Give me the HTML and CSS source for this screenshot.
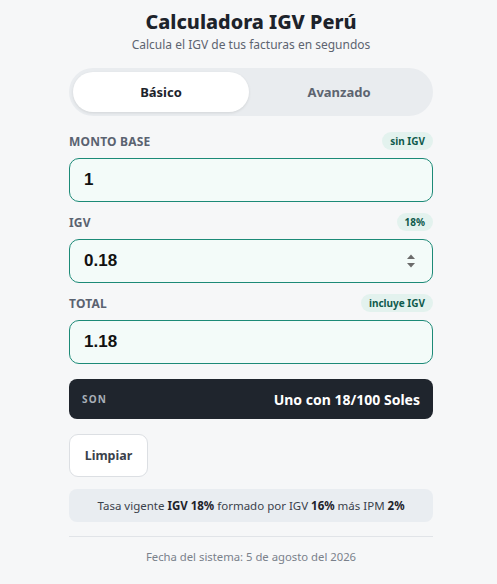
FILE: index.html
```html
<!DOCTYPE html>
<html lang="es">
<head>
<meta charset="utf-8">
<title>Calculadora IGV Perú</title>
<link rel="stylesheet" href="styles.css">
</head>
<body>
<main class="app">
  <header class="head">
    <h1 class="title">Calculadora IGV Perú</h1>
    <p class="subtitle">Calcula el IGV de tus facturas en segundos</p>
  </header>

  <nav class="tabs">
    <button class="tab tab-active">Básico</button>
    <button class="tab">Avanzado</button>
  </nav>

  <section class="field">
    <div class="field-head">
      <span class="label">MONTO BASE</span>
      <span class="badge">sin IGV</span>
    </div>
    <input class="input" type="text" value="1">
  </section>

  <section class="field">
    <div class="field-head">
      <span class="label">IGV</span>
      <span class="badge">18%</span>
    </div>
    <div class="input-wrap">
      <input class="input" type="text" value="0.18">
      <svg class="spinner" width="12" height="20" viewBox="0 0 12 20">
        <path d="M2 8 L6 3.5 L10 8 Z" fill="#6b6b6b"/>
        <path d="M2 12 L6 16.5 L10 12 Z" fill="#6b6b6b"/>
      </svg>
    </div>
  </section>

  <section class="field">
    <div class="field-head">
      <span class="label">TOTAL</span>
      <span class="badge">incluye IGV</span>
    </div>
    <input class="input" type="text" value="1.18">
  </section>

  <div class="son">
    <span class="son-label">SON</span>
    <span class="son-value">Uno con 18/100 Soles</span>
  </div>

  <div class="actions">
    <button class="btn">Limpiar</button>
  </div>

  <div class="info"><span>Tasa vigente <b>IGV 18%</b> formado por IGV <b>16%</b> más IPM <b>2%</b></span></div>

  <footer class="foot">Fecha del sistema: 5 de agosto del 2026</footer>
</main>
</body>
</html>
```

FILE: styles.css
```css
* { box-sizing: border-box; }
html, body { margin: 0; padding: 0; }
body {
  background: #f6f7f8;
  font-family: "Noto Sans", "Open Sans", sans-serif;
  color: #1d232b;
}
.app {
  width: 364px;
  margin: 0 0 0 69px;
  padding-top: 8px;
  display: flex;
  flex-direction: column;
}
.head { text-align: center; }
.title {
  margin: 0;
  font-size: 19.8px;
  line-height: 27px;
  font-weight: 800;
  color: #1d232b;
}
.subtitle {
  margin: 0;
  padding-top: 1px;
  font-size: 12px;
  line-height: 18px;
  color: #5d6470;
}
.tabs {
  margin-top: 14px;
  height: 48px;
  border-radius: 24px;
  background: #e9ecef;
  padding: 4px;
  display: flex;
}
.tab {
  flex: 1;
  border: 0;
  background: transparent;
  border-radius: 20px;
  font-family: inherit;
  font-size: 13px;
  font-weight: 700;
  color: #5d6470;
  cursor: pointer;
}
.tab-active {
  flex: 0 0 176px;
  background: #ffffff;
  color: #1d232b;
  box-shadow: 0 1px 3px rgba(0,0,0,0.10);
}
.field { margin-top: 16px; }
.field + .field { margin-top: 11px; }
.field-head {
  display: flex;
  justify-content: space-between;
  align-items: center;
  height: 18px;
  margin-bottom: 8px;
}
.label {
  font-size: 12px;
  font-weight: 700;
  color: #5a6270;
  letter-spacing: 0.2px;
}
.badge {
  background: #e3f2ee;
  color: #0f5a4c;
  font-size: 10px;
  font-weight: 700;
  padding: 1px 8px;
  border-radius: 9px;
  line-height: 16px;
}
.input-wrap { position: relative; }
.input {
  display: block;
  width: 100%;
  height: 44px;
  border: 1.5px solid #1c8a77;
  border-radius: 10px;
  background: #f3fbf9;
  padding: 0 14px;
  font-family: "Liberation Sans", Arial, sans-serif;
  font-size: 17px;
  font-weight: 700;
  color: #111111;
  outline: none;
}
.spinner {
  position: absolute;
  right: 16px;
  top: 12px;
}
.son {
  margin-top: 15px;
  height: 40px;
  border-radius: 8px;
  background: #1f252d;
  display: flex;
  align-items: center;
  justify-content: space-between;
  padding: 0 13px;
}
.son-label {
  font-size: 10px;
  font-weight: 700;
  letter-spacing: 1.2px;
  color: #a8afb8;
}
.son-value {
  font-size: 14px;
  font-weight: 700;
  color: #ffffff;
}
.actions { margin-top: 15px; display: flex; }
.btn {
  width: 79px;
  height: 43px;
  background: #ffffff;
  border: 1px solid #dcdfe3;
  border-radius: 9px;
  font-family: inherit;
  font-size: 12.5px;
  font-weight: 700;
  color: #3a414b;
  cursor: pointer;
}
.info {
  margin-top: 12px;
  height: 33px;
  border-radius: 8px;
  background: #e9edf1;
  display: flex;
  align-items: center;
  justify-content: center;
  font-size: 11.5px;
  color: #3a414b;
}
.info b { color: #1d232b; }
.foot {
  margin-top: 14px;
  border-top: 1px solid #e1e4e8;
  padding-top: 12px;
  text-align: center;
  font-size: 11.3px;
  color: #7a818b;
}
```
